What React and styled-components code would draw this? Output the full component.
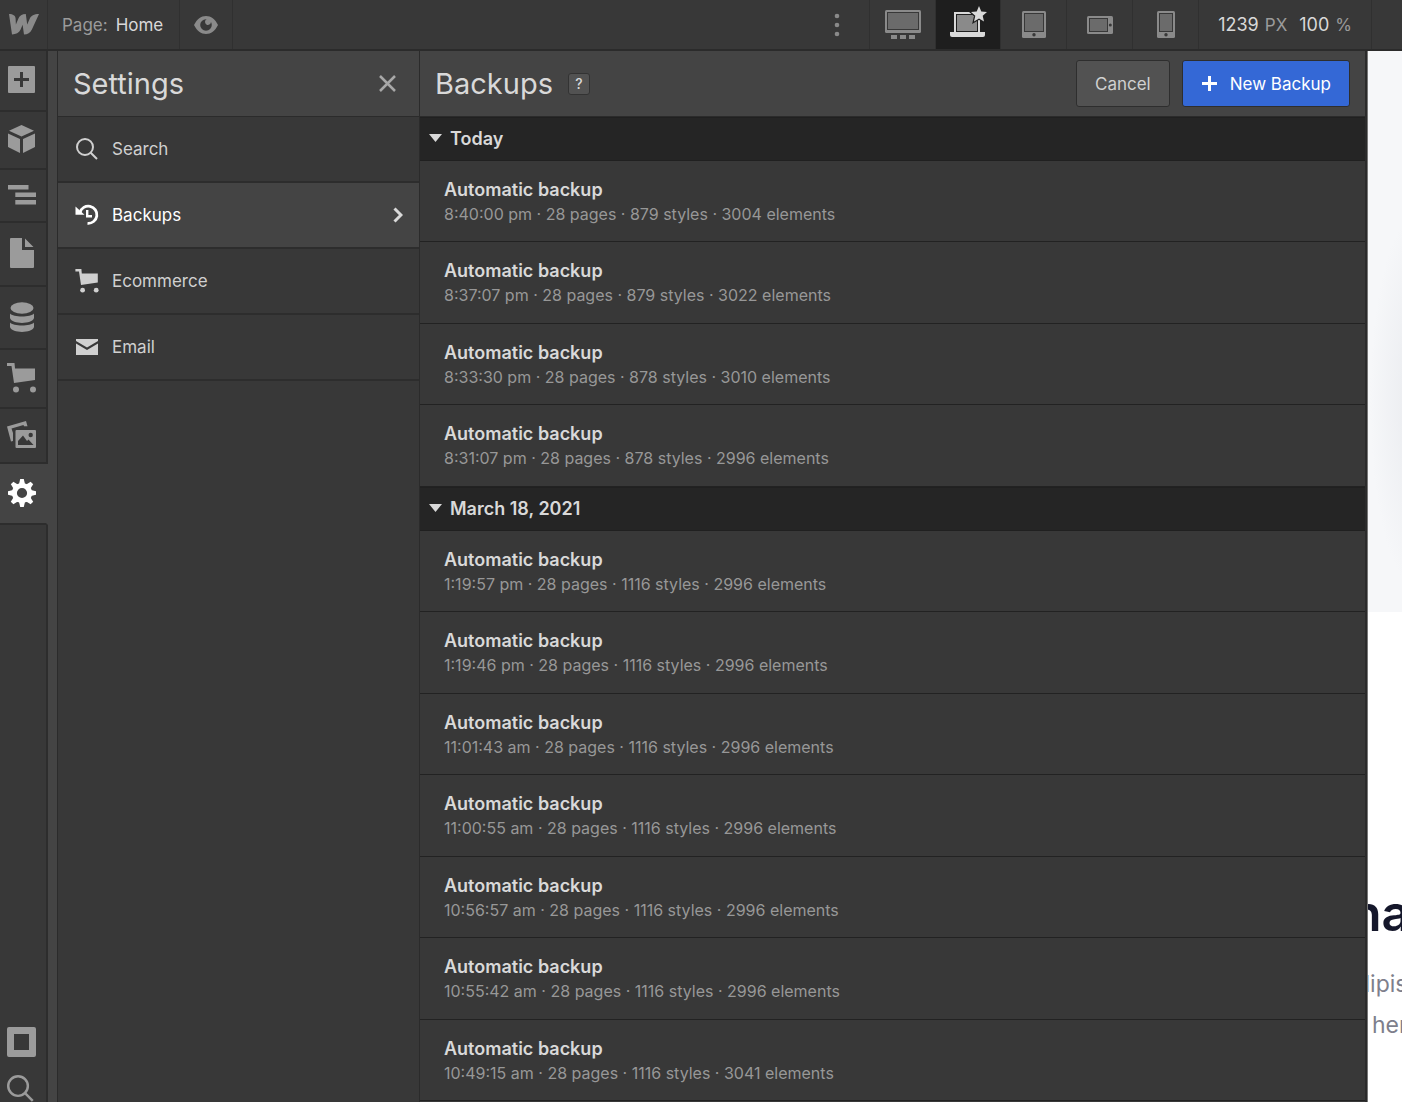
import React, { Component } from 'react';
import styled, { createGlobalStyle } from 'styled-components';

const GlobalStyle = createGlobalStyle`
    * {
        box-sizing: border-box;
    }

    body {
        margin: 0;
        background: #fff;
        font-family: Inter, 'Liberation Sans', sans-serif;
        -webkit-font-smoothing: antialiased;
    }

    button {
        font-family: inherit;
        cursor: pointer;
    }

    svg {
        display: block;
        flex: none;
    }
`

const Designer = styled.div`
    min-height: 100vh;
    display: flex;
    flex-direction: column;
    padding: 0 1px 1px 0;
    color: #d9d9d9;
`

const TopBar = styled.header`
    display: flex;
    height: 51px;
    background: #383838;
    border-bottom: 2px solid #2b2b2b;
`

const BarButton = styled.button`
    display: flex;
    align-items: center;
    justify-content: center;
    width: ${props => props.$width || 66}px;
    padding: 0;
    border: 0;
    border-right: 1px solid #303030;
    background: ${props => props.$active ? '#1e1e1e' : 'transparent'};
    color: ${props => props.$active ? '#d9d9d9' : '#8a8a8a'};
`

const PageButton = styled(BarButton)`
    width: auto;
    gap: 8px;
    padding: 0 16px 0 14px;
    font-size: 17px;
    color: #9b9b9b;

    strong {
        font-weight: 400;
        color: #d9d9d9;
    }
`

const BarRight = styled.div`
    display: flex;
    margin-left: auto;
    padding-right: 30px;
`

const CanvasSize = styled.button`
    display: flex;
    align-items: center;
    gap: 6px;
    padding: 0 19px;
    border: 0;
    border-right: 1px solid #303030;
    background: transparent;
    font-size: 17px;
    color: #9b9b9b;

    b {
        font-size: 18px;
        font-weight: 400;
        color: #d9d9d9;
    }

    b + span + b {
        margin-left: 6px;
    }
`

const Workspace = styled.div`
    flex: 1;
    display: grid;
    grid-template-columns: 57px 363px 1fr 35px;
`

const Sidebar = styled.nav`
    display: flex;
    flex-direction: column;
    background: #383838;
    border-right: 9px solid #444;
`

const SideButton = styled.button`
    display: flex;
    align-items: center;
    justify-content: center;
    width: 48px;
    height: ${props => props.$height}px;
    padding: 0 3px 2px 0;
    border: 0;
    border-bottom: 2px solid #2d2d2d;
    border-right: 2px solid ${props => props.$active ? '#444' : '#2d2d2d'};
    background: ${props => props.$active ? '#444' : '#383838'};
    color: ${props => props.$active ? '#fff' : '#9b9b9b'};
`

const SideBottom = styled.div`
    flex: 1;
    display: flex;
    flex-direction: column;
    justify-content: flex-end;
    align-items: flex-start;
    gap: 18px;
    padding-left: 7px;
    border-right: 2px solid #2d2d2d;
`

const ToolButton = styled.button`
    padding: 0;
    border: 0;
    background: transparent;
    color: #9b9b9b;
`

const SettingsPanel = styled.section`
    background: #383838;
    border-left: 1px solid #2b2b2b;
    border-right: 1px solid #2b2b2b;
`

const PanelHeader = styled.div`
    display: flex;
    align-items: center;
    height: 66px;
    padding: 0 15px;
    background: #444;
    border-bottom: 1px solid #2b2b2b;
`

const PanelTitle = styled.h1`
    margin: 0;
    font-size: 29px;
    line-height: 36px;
    font-weight: 400;
`

const CloseButton = styled.button`
    margin-left: auto;
    padding: 8px;
    border: 0;
    background: transparent;
    color: #a8a8a8;
`

const MenuItem = styled.button`
    display: flex;
    align-items: center;
    gap: 13px;
    width: 100%;
    height: 66px;
    padding: 0 16px 0 17px;
    border: 0;
    border-bottom: 2px solid #2d2d2d;
    background: ${props => props.$active ? '#444' : 'transparent'};
    color: ${props => props.$active ? '#fff' : '#d0d0d0'};
    font-size: 17px;
    text-align: left;

    > svg {
        margin-left: auto;
        color: #d9d9d9;
    }
`

const MenuIcon = styled.span`
    display: flex;
    justify-content: center;
    width: 24px;
`

const BackupsPanel = styled.section`
    background: #383838;
    border-right: 2px solid #2b2b2b;
`

const HelpButton = styled.button`
    width: 22px;
    height: 22px;
    margin-left: 15px;
    padding: 0;
    border: 1px solid #333;
    border-radius: 3px;
    background: #525252;
    color: #d9d9d9;
    font-size: 14px;
    line-height: 20px;
    font-weight: 500;
`

const HeaderActions = styled.div`
    display: flex;
    gap: 12px;
    margin-left: auto;
`

const ActionButton = styled.button`
    display: flex;
    align-items: center;
    gap: 12px;
    height: 47px;
    padding: 0 18px;
    border: 1px solid #2e2e2e;
    border-radius: 3px;
    background: ${props => props.$primary ? '#3468d6' : '#525252'};
    color: ${props => props.$primary ? '#fff' : '#d0d0d0'};
    font-size: 17px;
`

const GroupHeading = styled.button`
    display: flex;
    align-items: center;
    gap: 8px;
    width: 100%;
    height: 44px;
    padding: 0 9px 2px;
    border: 0;
    border-top: 1px solid #202020;
    border-bottom: 1px solid #202020;
    background: #252525;
    color: #d9d9d9;
    font-size: 18px;
    font-weight: 600;
`

const BackupList = styled.ul`
    margin: 0;
    padding: 0;
    list-style: none;
`

const BackupRow = styled.li`
    padding: 17px 24px 15px;
    border-bottom: 1px solid #222;

    &:nth-child(even) {
        padding-bottom: 16px;
    }
`

const BackupName = styled.div`
    font-size: 18px;
    line-height: 24px;
    font-weight: 600;
`

const BackupMeta = styled.div`
    font-size: 16px;
    line-height: 24px;
    color: #979797;
`

const SitePreview = styled.main`
    overflow: hidden;
    border-left: 1px solid #777;
    background: #fff;
    white-space: nowrap;
`

const Hero = styled.div`
    height: 561px;
    background: radial-gradient(ellipse 50px 190px at 52px 350px, #e8eaee, #f6f7f9);
`

const SiteHeading = styled.h2`
    margin: 271px 0 21px -17px;
    font-size: 50px;
    line-height: 60px;
    font-weight: 600;
    color: #15172b;
`

const SiteText = styled.p`
    margin: 0 0 0 ${props => props.$left}px;
    font-size: 23px;
    line-height: 41px;
    color: #7e7f8c;
`

const Svg = ({ w, h, children }) => (
    <svg width={w} height={h} viewBox={`0 0 ${w} ${h}`} fill="currentColor" aria-hidden="true">{children}</svg>
)

const LogoIcon = () => (
    <Svg w={30} h={21}>
        <path d="M0 0C4 0 6.4 1.6 6.6 4.5L6.9 10.6L9.2 5C10.5 1.6 13 0 16.8 0L18.2 10.6L20.6 5C22 1.6 25 0 30 0L22.9 15.4C21.3 18.8 18.5 20.5 15 20.5L13.6 10.8L11.6 15.6C10 19 7 20.5 3 20.5Z" />
    </Svg>
)

const EyeIcon = () => (
    <Svg w={24} h={18}>
        <path fillRule="evenodd" d="M0 9C3 3 7 0 12 0S21 3 24 9C21 15 17 18 12 18S3 15 0 9ZM12 3.2A5.8 5.8 0 1 0 17.8 9C17.8 8 17.5 7 17 6.1A3 3 0 1 1 12.6 3.3Z" />
    </Svg>
)

const DotsIcon = () => (
    <Svg w={6} h={24}>
        <circle cx="3" cy="3" r="2.3" /><circle cx="3" cy="12" r="2.3" /><circle cx="3" cy="21" r="2.3" />
    </Svg>
)

const DesktopIcon = () => (
    <Svg w={36} h={29}>
        <rect width="36" height="23" rx="1.5" />
        <rect x="2" y="2" width="32" height="18" fill="#383838" />
        <rect x="3" y="3" width="30" height="16" fill="#6b6b6b" />
        <path d="M6 25H12V29H6ZM15 25H21V29H15ZM24 25H30V29H24Z" />
    </Svg>
)

const LaptopIcon = () => (
    <Svg w={37} h={37}>
        <path d="M4 6H30V26H4Z" />
        <path d="M6 8H28V26H6Z" fill="#1e1e1e" />
        <path d="M7 9H27V25H7Z" fill="#8a8a8a" />
        <path d="M0 26H35V29Q35 31 33 31H2Q0 31 0 29Z" />
        <path stroke="#1e1e1e" strokeWidth="2.5" paintOrder="stroke" d="M29 0L31.3 5.4L37 5.9L32.7 9.7L34 15.4L29 12.4L24 15.4L25.3 9.7L21 5.9L26.7 5.4Z" />
    </Svg>
)

const TabletIcon = () => (
    <Svg w={24} h={27}>
        <rect width="24" height="27" rx="1.5" />
        <rect x="2" y="2" width="20" height="19" fill="#383838" />
        <rect x="3" y="3" width="18" height="17" fill="#6b6b6b" />
        <circle cx="12" cy="23.7" r="1.7" fill="#383838" />
    </Svg>
)

const LandscapeIcon = () => (
    <Svg w={26} h={18}>
        <rect width="26" height="18" rx="1.5" />
        <rect x="2" y="2" width="19" height="14" fill="#383838" />
        <rect x="3" y="3" width="17" height="12" fill="#6b6b6b" />
        <circle cx="23.3" cy="9" r="1.5" fill="#383838" />
    </Svg>
)

const PhoneIcon = () => (
    <Svg w={18} h={27}>
        <rect width="18" height="27" rx="1.5" />
        <rect x="2" y="2" width="14" height="19" fill="#383838" />
        <rect x="3" y="3" width="12" height="17" fill="#6b6b6b" />
        <circle cx="9" cy="23.7" r="1.7" fill="#383838" />
    </Svg>
)

const AddIcon = () => (
    <Svg w={27} h={27}>
        <path fillRule="evenodd" d="M1 0H26Q27 0 27 1V26Q27 27 26 27H1Q0 27 0 26V1Q0 0 1 0ZM12 6V12H6V15H12V21H15V15H21V12H15V6Z" />
    </Svg>
)

const CubeIcon = () => (
    <Svg w={27} h={28}>
        <path d="M13.5 0L26 5.8L13.5 11.6L1 5.8ZM0 8.5L12 14V28L0 22ZM27 8.5L15 14V28L27 22Z" />
    </Svg>
)

const NavigatorIcon = () => (
    <Svg w={28} h={20}>
        <path d="M0 0H20.5V4.5H0ZM7.3 7.5H28V12H7.3ZM7.3 15H28V19.5H7.3Z" />
    </Svg>
)

const PagesIcon = () => (
    <Svg w={24} h={30}>
        <path d="M1 0H12V12H24V29Q24 30 23 30H1Q0 30 0 29V1Q0 0 1 0ZM15 0.5L23.5 9H15Z" />
    </Svg>
)

const DatabaseIcon = () => (
    <Svg w={24} h={30}>
        <ellipse cx="12" cy="6" rx="11.5" ry="5.8" />
        <path d="M0 11.5C3 15.5 21 15.5 24 11.5V16C22 22.5 2 22.5 0 16ZM0 20.5C3 24.5 21 24.5 24 20.5V25C22 31.5 2 31.5 0 25Z" />
    </Svg>
)

const CartIcon = ({ w = 29, h = 30 }) => (
    <svg width={w} height={h} viewBox="0 0 29 30" fill="currentColor" aria-hidden="true">
        <path d="M0 0H7.5L8 5.5H28V17L7 20L4.500 3H0Z" />
        <circle cx="9" cy="26.5" r="3" /><circle cx="26" cy="26.5" r="3" />
    </svg>
)

const AssetsIcon = () => (
    <Svg w={29} h={27}>
        <path d="M0 5.5L19 0L20.5 5.3H17L16.5 4L4.5 7.5L6 12V20L4 20.5Z" />
        <path fillRule="evenodd" d="M9.5 9H28Q29 9 29 10V26Q29 27 28 27H9.5Q8.5 27 8.5 26V10Q8.5 9 9.5 9ZM11 24H26.5L21.5 18.5L20 20L16 14.5L11 20Z" />
        <circle cx="23.7" cy="14" r="2.2" fill="#383838" />
    </Svg>
)

const GEAR_TEETH = [0, 45, 90, 135, 180, 225, 270, 315]

const GearIcon = () => (
    <Svg w={28} h={28}>
        <circle cx="14" cy="14" r="7.6" fill="none" stroke="currentColor" strokeWidth="5" />
        {GEAR_TEETH.map(angle => (
            <path key={angle} transform={`rotate(${angle} 14 14)`} d="M12.2 0H15.8L17.2 6H10.8Z" />
        ))}
    </Svg>
)

const FrameIcon = () => (
    <Svg w={29} h={30}>
        <path fillRule="evenodd" d="M2 0H27Q29 0 29 2V28Q29 30 27 30H2Q0 30 0 28V2Q0 0 2 0ZM7 7V23H22V7Z" />
    </Svg>
)

const SearchIcon = ({ size = 22 }) => (
    <svg width={size} height={size} viewBox="0 0 22 22" fill="none" stroke="currentColor" strokeWidth="2" aria-hidden="true">
        <circle cx="9" cy="9" r="8" /><path d="M14.7 14.7L21 21" />
    </svg>
)

const HistoryIcon = () => (
    <Svg w={24} h={22}>
        <path d="M5 8.5A8.6 8.6 0 1 1 12.500 19.3" fill="none" stroke="currentColor" strokeWidth="2.8" />
        <path d="M0.500 2.5L9.500 10.8H0.500Z" />
        <path d="M12.2 6V12.3H17" fill="none" stroke="currentColor" strokeWidth="2.4" />
    </Svg>
)

const MailIcon = () => (
    <Svg w={24} h={18}>
        <path d="M1 1H23V3L12 9.5L1 3ZM1 5.5L12 12L23 5.5V17H1Z" />
    </Svg>
)

const ChevronIcon = () => (
    <Svg w={10} h={16}>
        <path d="M1.5 1.5L8 8L1.5 14.5" fill="none" stroke="currentColor" strokeWidth="3" />
    </Svg>
)

const CloseIcon = () => (
    <Svg w={17} h={17}>
        <path d="M1 1L16 16M16 1L1 16" stroke="currentColor" strokeWidth="2.5" />
    </Svg>
)

const PlusIcon = () => (
    <Svg w={17} h={17}>
        <path d="M7 1H10V7H16V10H10V16H7V10H1V7H7Z" />
    </Svg>
)

const CaretIcon = () => (
    <Svg w={13} h={8}>
        <path d="M0 0H13L6.5 8Z" />
    </Svg>
)

const devices = [
    { name: 'Desktop', icon: <DesktopIcon /> },
    { name: 'Laptop', icon: <LaptopIcon />, width: 65 },
    { name: 'Tablet', icon: <TabletIcon /> },
    { name: 'Mobile landscape', icon: <LandscapeIcon /> },
    { name: 'Mobile portrait', icon: <PhoneIcon /> }
]

const tools = [
    { name: 'Add', icon: <AddIcon />, height: 61 },
    { name: 'Symbols', icon: <CubeIcon />, height: 58 },
    { name: 'Navigator', icon: <NavigatorIcon />, height: 53 },
    { name: 'Pages', icon: <PagesIcon />, height: 64 },
    { name: 'CMS', icon: <DatabaseIcon />, height: 63 },
    { name: 'Store', icon: <CartIcon />, height: 59 },
    { name: 'Assets', icon: <AssetsIcon />, height: 55 },
    { name: 'Settings', icon: <GearIcon />, height: 61 }
]

const menu = [
    { name: 'Search', icon: <SearchIcon /> },
    { name: 'Backups', icon: <HistoryIcon /> },
    { name: 'Ecommerce', icon: <CartIcon w={24} h={24} /> },
    { name: 'Email', icon: <MailIcon /> }
]

const groups = [
    {
        title: 'Today',
        backups: [
            { time: '8:40:00 pm', styles: 879, elements: 3004 },
            { time: '8:37:07 pm', styles: 879, elements: 3022 },
            { time: '8:33:30 pm', styles: 878, elements: 3010 },
            { time: '8:31:07 pm', styles: 878, elements: 2996 }
        ]
    },
    {
        title: 'March 18, 2021',
        backups: [
            { time: '1:19:57 pm', styles: 1116, elements: 2996 },
            { time: '1:19:46 pm', styles: 1116, elements: 2996 },
            { time: '11:01:43 am', styles: 1116, elements: 2996 },
            { time: '11:00:55 am', styles: 1116, elements: 2996 },
            { time: '10:56:57 am', styles: 1116, elements: 2996 },
            { time: '10:55:42 am', styles: 1116, elements: 2996 },
            { time: '10:49:15 am', styles: 1116, elements: 3041 }
        ]
    }
]

class App extends Component {
    state = {
        device: 'Laptop',
        tool: 'Settings',
        section: 'Backups',
        closed: []
    }

    toggleGroup = (title) => {
        this.setState(prevState => ({
            closed: prevState.closed.includes(title)
                ? prevState.closed.filter(item => item !== title)
                : [...prevState.closed, title]
        }))
    }

    render() {
        const { device, tool, section, closed } = this.state
        return (
            <Designer>
                <GlobalStyle />
                <TopBar>
                    <BarButton $width={48} aria-label="Menu"><LogoIcon /></BarButton>
                    <PageButton><span>Page:</span><strong>Home</strong></PageButton>
                    <BarButton $width={53} aria-label="Preview"><EyeIcon /></BarButton>
                    <BarRight>
                        <BarButton aria-label="More"><DotsIcon /></BarButton>
                        {devices.map(item => (
                            <BarButton
                                key={item.name}
                                aria-label={item.name}
                                $width={item.width}
                                $active={item.name === device}
                                onClick={() => this.setState({ device: item.name })}
                            >
                                {item.icon}
                            </BarButton>
                        ))}
                        <CanvasSize>
                            <b>1239</b><span>PX</span><b>100</b><span>%</span>
                        </CanvasSize>
                    </BarRight>
                </TopBar>
                <Workspace>
                    <Sidebar>
                        {tools.map(item => (
                            <SideButton
                                key={item.name}
                                aria-label={item.name}
                                $height={item.height}
                                $active={item.name === tool}
                                onClick={() => this.setState({ tool: item.name })}
                            >
                                {item.icon}
                            </SideButton>
                        ))}
                        <SideBottom>
                            <ToolButton aria-label="Outlines"><FrameIcon /></ToolButton>
                            <ToolButton aria-label="Find"><SearchIcon size={27} /></ToolButton>
                        </SideBottom>
                    </Sidebar>
                    <SettingsPanel>
                        <PanelHeader>
                            <PanelTitle>Settings</PanelTitle>
                            <CloseButton aria-label="Close"><CloseIcon /></CloseButton>
                        </PanelHeader>
                        {menu.map(item => (
                            <MenuItem
                                key={item.name}
                                $active={item.name === section}
                                onClick={() => this.setState({ section: item.name })}
                            >
                                <MenuIcon>{item.icon}</MenuIcon>
                                <span>{item.name}</span>
                                {item.name === section && <ChevronIcon />}
                            </MenuItem>
                        ))}
                    </SettingsPanel>
                    <BackupsPanel>
                        <PanelHeader>
                            <PanelTitle as="h2">Backups</PanelTitle>
                            <HelpButton aria-label="Help">?</HelpButton>
                            <HeaderActions>
                                <ActionButton>Cancel</ActionButton>
                                <ActionButton $primary><PlusIcon />New Backup</ActionButton>
                            </HeaderActions>
                        </PanelHeader>
                        {groups.map(group => (
                            <React.Fragment key={group.title}>
                                <GroupHeading onClick={() => this.toggleGroup(group.title)}>
                                    <CaretIcon />{group.title}
                                </GroupHeading>
                                {!closed.includes(group.title) && <BackupList>
                                    {group.backups.map(backup => (
                                        <BackupRow key={backup.time}>
                                            <BackupName>Automatic backup</BackupName>
                                            <BackupMeta>{`${backup.time} · 28 pages · ${backup.styles} styles · ${backup.elements} elements`}</BackupMeta>
                                        </BackupRow>
                                    ))}
                                </BackupList>}
                            </React.Fragment>
                        ))}
                    </BackupsPanel>
                    <SitePreview>
                        <Hero />
                        <SiteHeading>na</SiteHeading>
                        <SiteText $left={-12}>dipis</SiteText>
                        <SiteText $left={4}>her</SiteText>
                    </SitePreview>
                </Workspace>
            </Designer>
        )
    }
}

export default App
